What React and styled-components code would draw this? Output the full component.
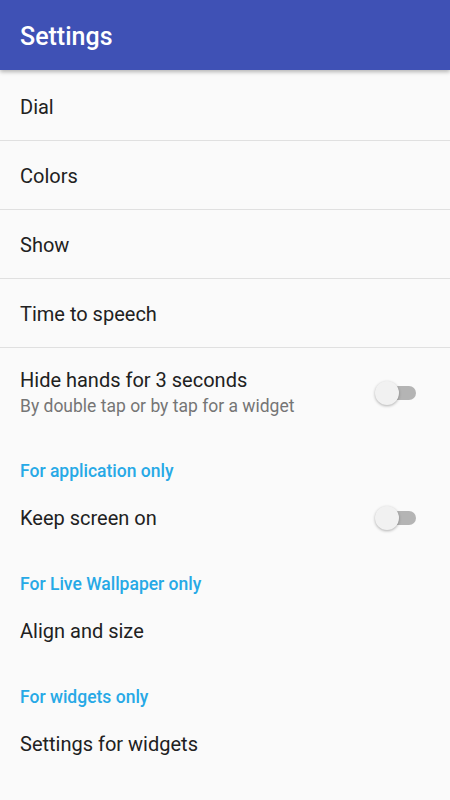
import React, { useState } from 'react';
import styled, { createGlobalStyle } from 'styled-components';

const GlobalStyle = createGlobalStyle`
    html, body {
        margin: 0;
        padding: 0;
        background: #fafafa;
        font-family: Roboto, "Noto Sans", sans-serif;
    }
`;

const Screen = styled.div`
    width: 450px;
    min-height: 800px;
    background: #fafafa;
    display: flex;
    flex-direction: column;
`;

const AppBar = styled.header`
    height: 70px;
    background: #3f51b5;
    display: flex;
    align-items: center;
    padding: 0 20px;
    box-shadow: 0 2px 4px rgba(0, 0, 0, 0.28);
    position: relative;
    z-index: 1;
`;

const Title = styled.h1`
    margin: 0;
    margin-top: 2px;
    color: #fff;
    font-size: 25px;
    font-weight: 500;
`;

const List = styled.div`
    display: flex;
    flex-direction: column;
    padding-top: 2px;
`;

const Row = styled.div`
    display: flex;
    align-items: center;
    padding: 0 20px;
    height: ${props => props.$height || 56}px;
    border-bottom: ${props => props.$divider ? '1px solid #e0e0e0' : 'none'};
    box-sizing: content-box;
`;

const TallRow = styled.div`
    display: flex;
    align-items: center;
    padding: 20px 20px 15px;
`;

const Texts = styled.div`
    flex: 1;
    display: flex;
    flex-direction: column;
`;

const Label = styled.span`
    font-size: 20px;
    line-height: 24px;
    padding-top: ${props => props.$nudge || 0}px;
    color: #212121;
`;

const Summary = styled.span`
    font-size: 17.5px;
    line-height: 24px;
    margin-top: 2px;
    color: #757575;
`;

const Category = styled.div`
    padding: 27px 20px 8px;
    font-size: 17.5px;
    line-height: 22px;
    font-weight: 500;
    color: #27a9e6;
`;

const SwitchBox = styled.button`
    position: relative;
    width: 42px;
    height: 24px;
    margin-right: 13px;
    padding: 0;
    border: none;
    background: none;
    cursor: pointer;
    flex-shrink: 0;
`;

const Track = styled.span`
    position: absolute;
    left: 7px;
    top: 5px;
    width: 34px;
    height: 14px;
    border-radius: 7px;
    background: ${props => props.$on ? '#9fa8da' : '#b4b4b4'};
`;

const Thumb = styled.span`
    position: absolute;
    top: 0;
    left: ${props => props.$on ? '18px' : '0'};
    width: 24px;
    height: 24px;
    border-radius: 50%;
    background: ${props => props.$on ? '#3f51b5' : '#f1f1f1'};
    box-shadow: 0 1px 3px rgba(0, 0, 0, 0.3);
`;

const Switch = () => {
    const [on, setOn] = useState(false);
    return (
        <SwitchBox onClick={() => setOn(!on)}>
            <Track $on={on} />
            <Thumb $on={on} />
        </SwitchBox>
    );
};

const App = () => {
    return (
        <Screen>
            <GlobalStyle />
            <AppBar>
                <Title>Settings</Title>
            </AppBar>
            <List>
                <Row $height={68} $divider><Label $nudge={2}>Dial</Label></Row>
                <Row $height={68} $divider><Label $nudge={2}>Colors</Label></Row>
                <Row $height={68} $divider><Label $nudge={2}>Show</Label></Row>
                <Row $height={68} $divider><Label $nudge={2}>Time to speech</Label></Row>
                <TallRow>
                    <Texts>
                        <Label>Hide hands for 3 seconds</Label>
                        <Summary>By double tap or by tap for a widget</Summary>
                    </Texts>
                    <Switch />
                </TallRow>
                <Category>For application only</Category>
                <Row>
                    <Texts><Label>Keep screen on</Label></Texts>
                    <Switch />
                </Row>
                <Category>For Live Wallpaper only</Category>
                <Row><Label>Align and size</Label></Row>
                <Category>For widgets only</Category>
                <Row><Label>Settings for widgets</Label></Row>
            </List>
        </Screen>
    );
};

export default App;
